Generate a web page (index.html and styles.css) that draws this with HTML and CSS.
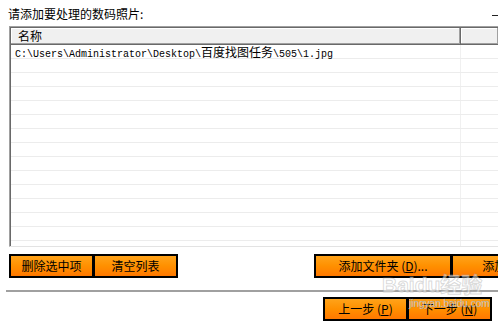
FILE: index.html
```html
<!DOCTYPE html>
<html>
<head>
<meta charset="utf-8">
<link rel="stylesheet" href="styles.css">
</head>
<body>
<div class="top">
  <div class="title">请添加要处理的数码照片:</div>
  <div class="tick"></div>
</div>
<div class="list">
  <div class="hdr">
    <div class="hcell name">名称</div>
    <div class="hcell rest"></div>
  </div>
  <div class="rows">
    <div class="row first"><div class="c1"><span class="m">C:\Users\Administrator\Desktop\</span>百度找图任务<span class="m">\505\1.jpg</span></div><div class="c2"></div></div>
    <div class="row"><div class="c1"></div><div class="c2"></div></div>
    <div class="row"><div class="c1"></div><div class="c2"></div></div>
    <div class="row"><div class="c1"></div><div class="c2"></div></div>
    <div class="row"><div class="c1"></div><div class="c2"></div></div>
    <div class="row"><div class="c1"></div><div class="c2"></div></div>
    <div class="row"><div class="c1"></div><div class="c2"></div></div>
    <div class="row"><div class="c1"></div><div class="c2"></div></div>
    <div class="row"><div class="c1"></div><div class="c2"></div></div>
    <div class="row"><div class="c1"></div><div class="c2"></div></div>
    <div class="row"><div class="c1"></div><div class="c2"></div></div>
    <div class="row"><div class="c1"></div><div class="c2"></div></div>
    <div class="row"><div class="c1"></div><div class="c2"></div></div>
    <div class="row"><div class="c1"></div><div class="c2"></div></div>
    <div class="row"><div class="c1"></div><div class="c2"></div></div>
  </div>
</div>
<div class="btnrow">
  <div class="group">
    <button class="btn w84">删除选中项</button>
    <button class="btn w84">清空列表</button>
  </div>
  <div class="group right">
    <button class="btn w137">添加文件夹 (<u>D</u>)...</button>
    <button class="btn w137">添加文件 (<u>F</u>)...</button>
  </div>
</div>
<div class="sep"></div>
<div class="navrow">
  <button class="btn w84">上一步 (<u>P</u>)</button>
  <button class="btn w84">下一步 (<u>N</u>)</button>
</div>
<div class="bottomline"></div>
<div class="wm">
  <div class="wm-big">Baidu经验</div>
  <div class="wm-small">jingyan.baidu.com</div>
</div>
</body>
</html>
```
FILE: styles.css
```css
body {
  margin: 0;
  width: 498px;
  height: 324px;
  overflow: hidden;
  background: #fff;
  font-family: "Noto Sans CJK SC", "Noto Sans", sans-serif;
  font-size: 12px;
  color: #000;
  position: relative;
}
.top {
  display: flex;
  height: 26px;
}
.title {
  padding: 6px 0 0 8px;
  line-height: 16px;
}
.tick {
  margin-left: auto;
  margin-top: 15px;
  width: 6px;
  height: 1px;
  background: #222;
}
.list {
  margin-left: 9px;
  width: 489px;
  height: 221px;
  box-sizing: border-box;
  border-top: 1px solid #a0a0a0;
  border-left: 1px solid #a0a0a0;
  box-shadow: inset 1px 1px 0 #696969;
  padding: 1px 0 0 1px;
  overflow: hidden;
  border-bottom: 1px solid #e3e3e3;
}
.hdr {
  display: flex;
  height: 16px;
  background: #f0f0f0;
  border-bottom: 1px solid #696969;
}
.hcell {
  box-sizing: border-box;
  height: 16px;
  line-height: 15px;
  border-right: 1px solid #696969;
  box-shadow: inset -1px -1px 0 #a0a0a0, inset 1px 1px 0 #fff;
}
.hcell.name {
  width: 450px;
  padding-left: 7px;
}
.hcell.rest {
  flex: 1;
  border-right: none;
}
.rows {
  display: flex;
  flex-direction: column;
}
.row {
  display: flex;
  height: 13px;
  border-bottom: 1px solid #ececec;
}
.c1 {
  width: 450px;
  border-right: 1px solid #f0f0f0;
  padding-left: 4px;
  box-sizing: border-box;
  line-height: 13px;
  white-space: nowrap;
  font-size: 12px;
}
.m {
  font-family: "Liberation Mono", monospace;
  font-size: 10px;
}
.c2 {
  flex: 1;
}
.btnrow {
  display: flex;
  margin-top: 7px;
  padding-left: 9px;
  height: 24px;
  overflow: hidden;
}
.group {
  display: flex;
  flex-shrink: 0;
}
.group.right {
  margin-left: 136px;
}
.btn {
  height: 24px;
  flex-shrink: 0;
  box-sizing: border-box;
  border: 2px solid #000;
  background: linear-gradient(#ffa31a, #ff9000 50%, #ff7800);
  font-family: "Noto Sans CJK SC", sans-serif;
  font-size: 12px;
  color: #000;
  padding: 0;
  line-height: 18px;
  white-space: nowrap;
}
.btn + .btn {
  margin-left: -1px;
}
.w84 { width: 85px; }
.w137 { width: 138px; }
.sep {
  margin: 12px 0 0 6px;
  height: 2px;
  background: #a0a0a0;
  border-bottom: 1px solid #fff;
}
.navrow {
  display: flex;
  margin-top: 4px;
  padding-left: 323px;
  height: 24px;
}
.bottomline {
  margin-top: 3px;
  height: 2px;
  background: #555;
}
.wm {
  position: absolute;
  left: 382px;
  top: 273px;
  pointer-events: none;
  white-space: nowrap;
}
.wm-big {
  font-family: "Liberation Sans", "Noto Sans CJK SC", sans-serif;
  font-weight: bold;
  font-size: 21px;
  line-height: 24px;
  color: rgba(255, 255, 255, 0.5);
  -webkit-text-stroke: 1px rgba(160, 160, 160, 0.4);
}
.wm-small {
  margin: 1px 0 0 27px;
  font-family: "Liberation Sans", sans-serif;
  font-size: 10px;
  line-height: 12px;
  color: rgba(255, 255, 255, 0.8);
  -webkit-text-stroke: 0.4px rgba(120, 120, 120, 0.6);
}
```
